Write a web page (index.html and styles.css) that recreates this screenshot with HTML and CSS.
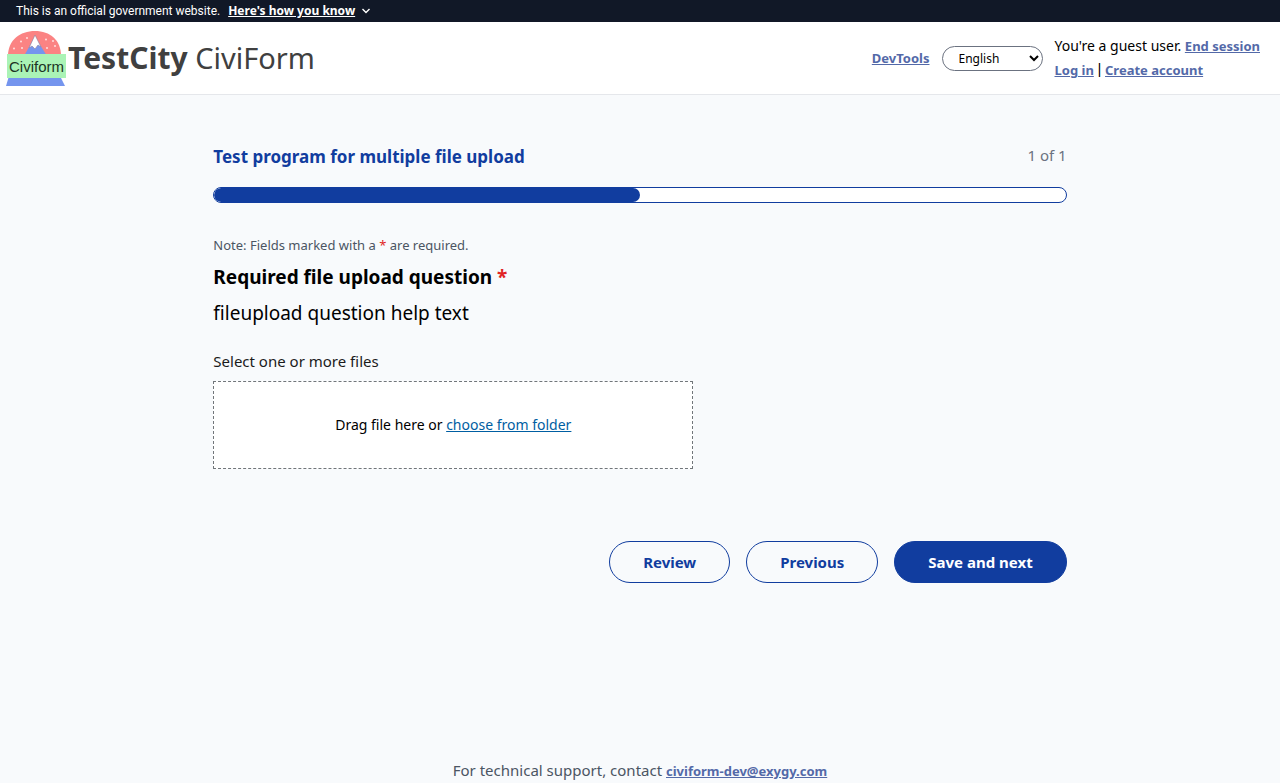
FILE: index.html
```html
<!DOCTYPE html>
<html lang="en">
<head>
<meta charset="utf-8">
<meta name="viewport" content="width=device-width, initial-scale=1">
<title>TestCity CiviForm</title>
<link rel="stylesheet" href="styles.css">
</head>
<body>
<section class="gov-banner">
  <p class="gov-text">This is an official government website.</p>
  <button class="gov-toggle" type="button"><span class="gov-label">Here's how you know</span>
    <svg class="chevron" viewBox="0 0 10 6" aria-hidden="true"><path d="M1.5 1L5 4.5L8.5 1" fill="none" stroke="currentColor" stroke-width="1.4"/></svg>
  </button>
</section>
<header class="site-header">
  <a class="brand" href="#">
    <svg class="logo" viewBox="0 0 64 60" role="img" aria-label="Civiform">
      <path d="M4 28C4 12 16 3 31 3S57 12 57 28Z" fill="#fb8383"/>
      <path d="M20 28L29 12H33L43 28Z" fill="#7595ee"/>
      <path d="M31 7L37 19L34 17L31 21L28 18L25 20Z" fill="#fff" stroke="#8a7f9a" stroke-width=".6"/>
      <g fill="#ffdede"><circle cx="17" cy="13.500" r="1"/><circle cx="23" cy="10" r="1"/><circle cx="10" cy="20.500" r="1"/><circle cx="18" cy="20" r="1"/><circle cx="42" cy="11.500" r="1"/><circle cx="49" cy="13" r="1"/><circle cx="43" cy="20" r="1"/><circle cx="51" cy="18" r="1"/></g>
      <path d="M5 48H56L61 58H2Z" fill="#7595ee"/>
      <path d="M3 26H62V50H3Z" fill="#aaf3b6"/>
      <text class="logo-text" x="5" y="44">Civiform</text>
    </svg>
    <span class="brand-name"><b>TestCity</b> CiviForm</span>
  </a>
  <nav class="account">
    <a class="link" href="#">DevTools</a>
    <select class="language" aria-label="Language"><option>English</option><option>Español</option></select>
    <div class="session">
      <p>You're a guest user. <a class="link" href="#">End session</a></p>
      <p><a class="link" href="#">Log in</a> <span class="divider">|</span> <a class="link" href="#">Create account</a></p>
    </div>
  </nav>
</header>
<main class="content">
  <div class="program-head">
    <h1 class="program-title">Test program for multiple file upload</h1>
    <span class="step">1 of 1</span>
  </div>
  <div class="progress"><div class="progress-fill"></div></div>
  <form class="question-form">
    <p class="note">Note: Fields marked with a <span class="required">*</span> are required.</p>
    <h2 class="question">Required file upload question <span class="required">*</span></h2>
    <p class="help">fileupload question help text</p>
    <label class="file-label" for="files">Select one or more files</label>
    <div class="dropzone">
      <span>Drag file here or <span class="choose">choose from folder</span></span>
      <input class="file-input" id="files" type="file" multiple>
    </div>
    <div class="actions">
      <button class="btn" type="button">Review</button>
      <button class="btn" type="button">Previous</button>
      <button class="btn btn-solid" type="button">Save and next</button>
    </div>
  </form>
</main>
<footer class="site-footer">For technical support, contact <a class="link" href="#">civiform-dev@exygy.com</a></footer>
</body>
</html>
```
FILE: styles.css
```css
* { box-sizing: border-box; }
body {
  margin: 0;
  min-height: 100vh;
  display: flex;
  flex-direction: column;
  background: #f8fafc;
  color: #000;
  font-family: "Noto Sans", sans-serif;
  font-size: 13px;
  line-height: 24px;
}
p, h1, h2 { margin: 0; }
.gov-banner {
  display: flex;
  align-items: center;
  gap: 8px;
  padding: 0 16px;
  background: #111827;
  color: #fff;
  font-size: 12px;
  line-height: 22px;
}
.gov-text { font-family: Roboto, sans-serif; }
.gov-toggle {
  display: flex;
  align-items: center;
  gap: 6px;
  padding: 0;
  border: 0;
  background: none;
  color: inherit;
  font: inherit;
}
.gov-label { font-weight: 700; text-decoration: underline; }
.chevron { width: 10px; height: 6px; }
.site-header {
  display: flex;
  justify-content: space-between;
  align-items: center;
  padding: 6px 20px 6px 4px;
  background: #fff;
  border-bottom: 1px solid #e5e7eb;
}
.brand {
  display: flex;
  align-items: center;
  color: #404040;
  text-decoration: none;
}
.logo { width: 64px; height: 60px; }
.logo-text { font: 15px "Liberation Sans", sans-serif; fill: #1c3324; }
.brand-name { font-size: 29px; line-height: 36px; }
.brand-name b { font-size: 30px; }
.account { display: flex; align-items: center; gap: 12px; }
.session { font-size: 14px; }
.link { color: #5369a8; font-size: 13px; font-weight: 700; }
.language {
  width: 101px;
  height: 25px;
  padding: 0 0 0 12px;
  border: 1px solid #6b7280;
  border-radius: 13px;
  background: #fff;
  color: #000;
  font: 12px "Noto Sans", sans-serif;
}
.divider { font-family: Roboto, sans-serif; font-size: 16px; }
.content { width: calc(100% * 2 / 3); margin: 0 auto; padding-top: 48px; }
.program-head { display: flex; justify-content: space-between; }
.program-title { color: #113d9f; font-size: 17px; line-height: 28px; }
.step { color: #6b7280; font-size: 15px; }
.progress {
  height: 16px;
  margin-top: 16px;
  border: 1px solid #113d9f;
  border-radius: 8px;
  background: #fff;
  overflow: hidden;
}
.progress-fill { width: 50%; height: 100%; border-radius: 8px; background: #113d9f; }
.question-form { padding-top: 32px; }
.note { color: #4b5563; line-height: 20px; }
.required { color: #e02424; }
.question { margin-top: 8px; font-size: 19px; line-height: 28px; }
.help { margin-top: 8px; font-size: 19px; line-height: 28px; }
.file-label { display: block; margin-top: 22px; color: #1b1b1b; font-size: 15px; }
.dropzone {
  position: relative;
  max-width: 480px;
  margin-top: 8px;
  padding: 32px 16px;
  border: 1px dashed #71767a;
  background: #fff;
  font-size: 14px;
  line-height: 22px;
  text-align: center;
}
.choose { color: #005ea2; text-decoration: underline; }
.file-input { position: absolute; inset: 0; width: 100%; opacity: 0; }
.actions { display: flex; justify-content: flex-end; gap: 16px; margin-top: 72px; }
.btn {
  padding: 8px 33px;
  border: 1px solid #113d9f;
  border-radius: 24px;
  background: transparent;
  color: #113d9f;
  font: 700 15px/24px "Noto Sans", sans-serif;
}
.btn-solid { background: #113d9f; color: #fff; }
.site-footer { margin-top: auto; color: #4b5563; font-size: 15px; text-align: center; }
```
